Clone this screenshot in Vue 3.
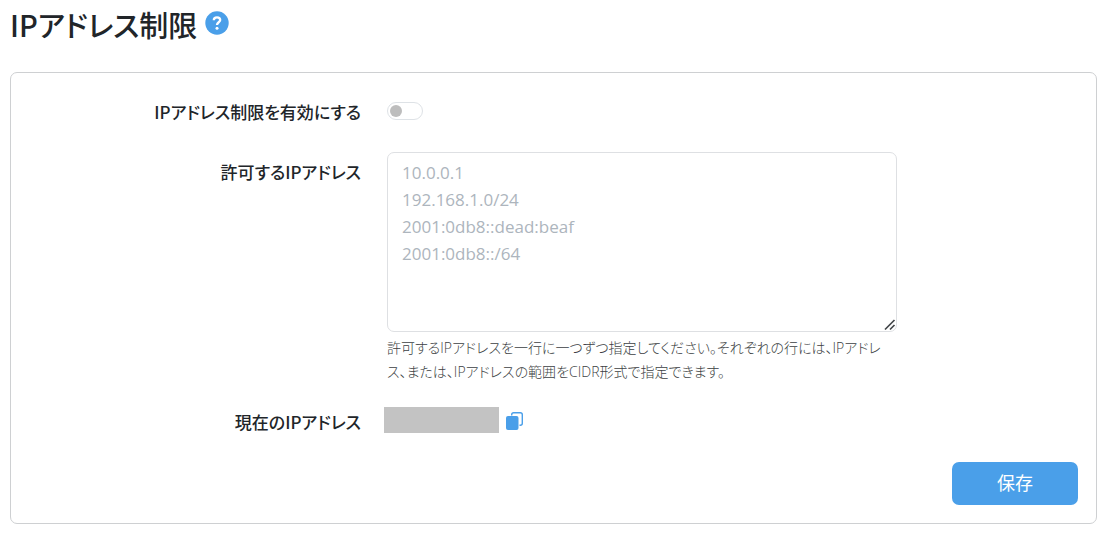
<script setup>
import { ref } from 'vue'

const enabled = ref(false)
const addresses = ref('')
const example = ['10.0.0.1', '192.168.1.0/24', '2001:0db8::dead:beaf', '2001:0db8::/64'].join('\n')
</script>

<template>
  <main class="page">
    <header class="heading">
      <h1>IPアドレス制限</h1>
      <button type="button" class="icon-button help" aria-label="ヘルプ">
        <svg width="24" height="24" viewBox="0 0 24 24" fill="none">
          <circle cx="12" cy="12" r="11.7" fill="#4a9fe9" />
          <path d="M8.8 9.2C8.8 7.3 10.2 6.3 12 6.3s3.2 1 3.2 2.7c0 2.2-3.2 2.3-3.2 4.9" stroke="#fff" stroke-width="2.3" />
          <circle cx="12" cy="17.3" r="1.5" fill="#fff" />
        </svg>
      </button>
    </header>

    <form class="card" @submit.prevent>
      <div class="row">
        <label class="label" for="enabled">IPアドレス制限を有効にする</label>
        <div class="switch-box">
          <input id="enabled" v-model="enabled" class="switch" type="checkbox" role="switch" />
        </div>
      </div>

      <div class="row">
        <label class="label" for="addresses">許可するIPアドレス</label>
        <div>
          <div class="field">
            <textarea id="addresses" v-model="addresses" class="addresses" :placeholder="example"></textarea>
            <svg class="grip" width="12" height="12" viewBox="0 0 12 12" fill="none" stroke="#44474a" stroke-width="1.7" aria-hidden="true">
              <path d="M1 10.5L10.5 1M6 10.5L10.5 6" />
            </svg>
          </div>
          <p class="hint">許可するIPアドレスを一行に一つずつ指定してください。それぞれの行には、IPアドレス、または、IPアドレスの範囲をCIDR形式で指定できます。</p>
        </div>
      </div>

      <div class="row current">
        <span class="label">現在のIPアドレス</span>
        <div class="value">
          <span class="masked"></span>
          <button type="button" class="icon-button" aria-label="コピー">
            <svg width="18" height="20" viewBox="0 0 18 20" fill="none">
              <path d="M5.7 4.5V3.7a2 2 0 0 1 2-2h6.6a2 2 0 0 1 2 2v8.6a2 2 0 0 1-2 2H13.5" transform="translate(0 1)" stroke="#4a9fe9" stroke-width="1.4" />
              <rect x="0" y="6" width="12.5" height="14" rx="2" fill="#4a9fe9" />
            </svg>
          </button>
        </div>
      </div>

      <div class="actions">
        <button type="submit" class="save">保存</button>
      </div>
    </form>
  </main>
</template>

<style>
body {
  background: #fff;
}
</style>

<style scoped>
.page {
  box-sizing: border-box;
  padding: 6px 14px 14px 10px;
  color: #212529;
  font-family: "Open Sans", "Noto Sans CJK JP", sans-serif;
  font-size: 17px;
  line-height: 27px;
  font-feature-settings: "palt";
}

.heading {
  display: flex;
  align-items: center;
  gap: 8px;
  height: 40px;
  margin-bottom: 26px;
}

h1,
.label {
  font-family: "Noto Sans CJK JP", sans-serif;
  font-weight: 500;
}

h1 {
  margin: 0 0 4px;
  font-size: 29px;
  line-height: 40px;
}

.icon-button {
  display: flex;
  padding: 0;
  border: 0;
  background: none;
  cursor: pointer;
}

.help {
  margin-bottom: 6px;
}

.card {
  padding: 25px 18px 18px 0;
  border: 1px solid #ced0d2;
  border-radius: 7px;
}

.row {
  display: grid;
  grid-template-columns: 70fr 102fr 31fr;
  column-gap: 26px;
  margin-bottom: 27px;
}

.label {
  text-align: right;
}

.row + .row .label {
  padding-top: 6px;
}

.switch-box {
  display: flex;
  align-items: center;
  height: 26px;
}

.switch {
  display: flex;
  align-items: center;
  box-sizing: border-box;
  width: 36px;
  height: 18px;
  margin: 0;
  padding: 0 2px;
  appearance: none;
  border: 1px solid #dee2e6;
  border-radius: 9px;
  background: #fff;
}

.switch::before {
  content: "";
  width: 12px;
  height: 12px;
  border-radius: 50%;
  background: #bdbdbd;
}

.switch:checked {
  justify-content: flex-end;
  background: #4a9fe9;
}

.field {
  position: relative;
}

.addresses {
  display: block;
  box-sizing: border-box;
  width: 100%;
  height: 180px;
  padding: 6px 14px;
  border: 1px solid #dee0e3;
  border-radius: 7px;
  background: #fff;
  color: #212529;
  font: inherit;
  resize: vertical;
}

.addresses::placeholder {
  color: #adb5bd;
}

.addresses::-webkit-resizer {
  background: transparent;
}

.grip {
  position: absolute;
  right: 1px;
  bottom: 1px;
  pointer-events: none;
}

.hint {
  margin: 4px 0 0;
  color: #3c3f43;
  font-size: 14px;
  font-weight: 300;
  line-height: 24px;
}

.value {
  display: flex;
  align-items: center;
  gap: 7px;
  margin-left: -3px;
}

.masked {
  width: 115px;
  height: 26px;
  background: #c3c3c3;
}

.row.current {
  align-items: start;
  margin: -4px 0 26px;
}

.row.current .label {
  padding: 1px 0;
}

.actions {
  display: flex;
  justify-content: flex-end;
}

.save {
  width: 126px;
  height: 43px;
  padding: 0;
  border: 0;
  border-radius: 7px;
  background: #4a9fe9;
  color: #fff;
  font: inherit;
  font-size: 18px;
  cursor: pointer;
}
</style>
